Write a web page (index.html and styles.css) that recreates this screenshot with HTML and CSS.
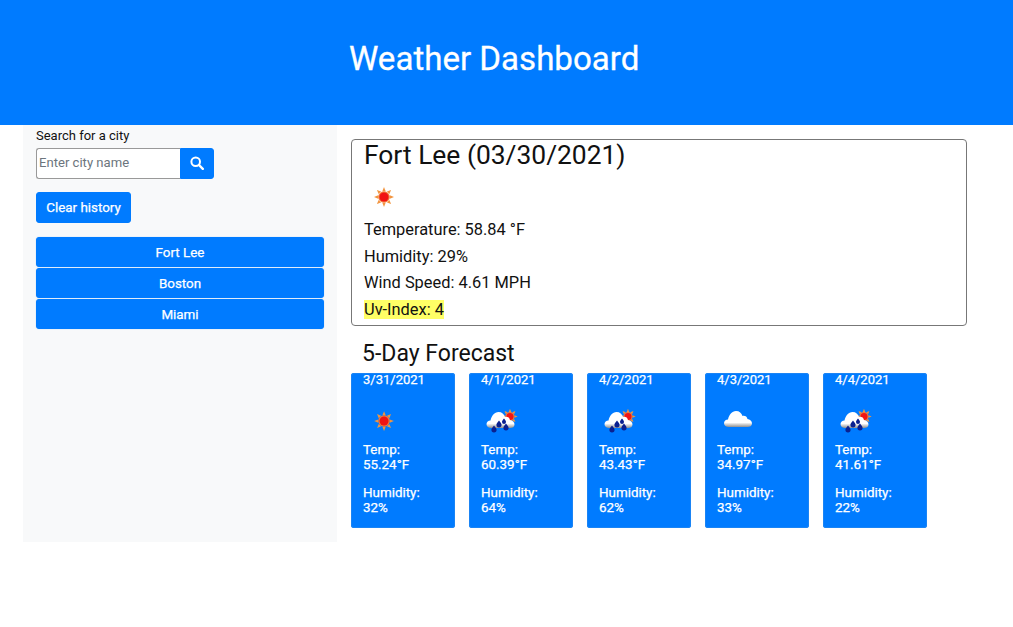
FILE: index.html

```html
<!DOCTYPE html>
<html lang="en">
  <head>
    <meta charset="UTF-8">
    <meta name="viewport" content="width=device-width, initial-scale=1">
    <title>Weather Dashboard</title>
    <link rel="stylesheet" href="styles.css">
  </head>
  <body>
    <svg class="defs" width="0" height="0">
      <defs>
        <g id="sun">
          <g fill="#f2953f">
            <path d="M12 0l2 5h-4z"/>
            <path d="M12 24l2-5h-4z"/>
            <path d="M0 12l5-2v4z"/>
            <path d="M24 12l-5-2v4z"/>
            <path d="M3.500 3.500l5 2-3 3z"/>
            <path d="M20.500 3.500l-5 2 3 3z"/>
            <path d="M3.500 20.500l5-2-3-3z"/>
            <path d="M20.500 20.500l-5-2 3-3z"/>
          </g>
          <circle cx="12" cy="12" r="7" fill="#f47c3c"/>
          <circle cx="12" cy="12" r="5.500" fill="#f01414"/>
        </g>
        <linearGradient id="cloud-fill" x1="0" y1="0" x2="0" y2="1">
          <stop offset="0" stop-color="#ffffff"/>
          <stop offset="0.72" stop-color="#ffffff"/>
          <stop offset="1" stop-color="#8f8f8f"/>
        </linearGradient>
        <path id="cloud" fill="url(#cloud-fill)" d="M5 16C2 16 0 14.500 0 12.200 0 10 1.800 8.600 4 8.500 5 4 8 0 12 0c3.500 0 5.500 2 6.500 5 1-.4 2.200-.3 3.200.3 1 .6 1.500 1.500 1.700 2.700 2.600 .3 4.600 2.100 4.600 4.400 0 2.200-2 3.600-4.500 3.600z"/>
        <g id="rain-cloud">
          <use href="#sun" transform="translate(21.300 -.2) scale(.64)"/>
          <use href="#cloud" transform="translate(5.500 3)"/>
          <g fill="#0a2090">
            <path d="M13 16.500c1.700 2.100 2.600 3.100 2.600 4.300a2.600 2.600 0 0 1-5.200 0c0-1.200.9-2.200 2.600-4.300z"/>
            <path d="M18 11.500c1.700 2.100 2.600 3.100 2.600 4.300a2.600 2.600 0 0 1-5.200 0c0-1.200.9-2.200 2.600-4.300z"/>
            <path d="M23 9.500c1.300 1.700 2 2.500 2 3.500a2 2 0 0 1-4 0c0-1 .7-1.800 2-3.500z"/>
            <path d="M25 14.500c1.700 2.100 2.600 3.100 2.600 4.300a2.600 2.600 0 0 1-5.200 0c0-1.200.9-2.200 2.600-4.300z"/>
          </g>
        </g>
      </defs>
    </svg>

    <header class="banner">
      <h1>Weather Dashboard</h1>
    </header>

    <div class="page">
      <aside class="sidebar">
        <label class="search-label" for="city">Search for a city</label>
        <form class="search">
          <input type="text" id="city" placeholder="Enter city name">
          <button type="button" class="btn search-btn" aria-label="Search">
            <svg width="14" height="14" viewBox="0 0 14 14">
              <circle cx="5.700" cy="5.700" r="4.300" fill="none" stroke="#fff" stroke-width="2"/>
              <path d="M9 9l3.800 3.800" stroke="#fff" stroke-width="2.400" stroke-linecap="round"/>
            </svg>
          </button>
        </form>
        <button type="button" class="btn clear-btn">Clear history</button>
        <div class="history">
          <button type="button" class="btn">Fort Lee</button>
          <button type="button" class="btn">Boston</button>
          <button type="button" class="btn">Miami</button>
        </div>
      </aside>

      <main class="content">
        <section class="today">
          <h2>Fort Lee (03/30/2021)</h2>
          <svg class="today-icon" width="20" height="20" viewBox="0 0 24 24"><use href="#sun"/></svg>
          <p>Temperature: 58.84 °F</p>
          <p>Humidity: 29%</p>
          <p>Wind Speed: 4.61 MPH</p>
          <p><span class="uv">Uv-Index: 4</span></p>
        </section>

        <h3>5-Day Forecast</h3>
        <div class="forecast">
          <div class="day">
            <div class="date">3/31/2021</div>
            <svg class="day-icon" width="40" height="26" viewBox="0 0 40 26"><use href="#sun" transform="translate(11.200 2.200) scale(.82)"/></svg>
            <p>Temp:<br>55.24°F</p>
            <p>Humidity:<br>32%</p>
          </div>
          <div class="day">
            <div class="date">4/1/2021</div>
            <svg class="day-icon" width="40" height="26" viewBox="0 0 40 26"><use href="#rain-cloud"/></svg>
            <p>Temp:<br>60.39°F</p>
            <p>Humidity:<br>64%</p>
          </div>
          <div class="day">
            <div class="date">4/2/2021</div>
            <svg class="day-icon" width="40" height="26" viewBox="0 0 40 26"><use href="#rain-cloud"/></svg>
            <p>Temp:<br>43.43°F</p>
            <p>Humidity:<br>62%</p>
          </div>
          <div class="day">
            <div class="date">4/3/2021</div>
            <svg class="day-icon" width="40" height="26" viewBox="0 0 40 26"><use href="#cloud" transform="translate(7 2)"/></svg>
            <p>Temp:<br>34.97°F</p>
            <p>Humidity:<br>33%</p>
          </div>
          <div class="day">
            <div class="date">4/4/2021</div>
            <svg class="day-icon" width="40" height="26" viewBox="0 0 40 26"><use href="#rain-cloud"/></svg>
            <p>Temp:<br>41.61°F</p>
            <p>Humidity:<br>22%</p>
          </div>
        </div>
      </main>
    </div>
  </body>
</html>
```

FILE: styles.css

```css
* {
  box-sizing: border-box;
}

body {
  margin: 0;
  background: #fff;
  color: #212529;
  font-family: Roboto, "Liberation Sans", sans-serif;
}

.defs {
  position: absolute;
}

.banner {
  height: 125px;
  padding: 37px 0 0 349px;
  background: #007bff;
  color: #fff;
}

.banner h1 {
  margin: 0;
  font-size: 33.100px;
  font-weight: 400;
  line-height: 44px;
  -webkit-text-stroke: .3px #fff;
}

.page {
  display: flex;
  padding-left: 23px;
}

.sidebar {
  width: 314px;
  height: 417px;
  padding: 3px 13px 0;
  background: #f8f9fa;
}

.search-label {
  display: block;
  height: 20px;
  font-size: 13px;
  line-height: 16px;
  color: #111;
}

.search {
  display: flex;
  width: 178px;
  height: 31px;
}

.search input {
  width: 144px;
  height: 31px;
  padding: 0 2px 2px;
  border: 1px solid #999;
  border-right: 0;
  border-radius: 3px 0 0 3px;
  background: #fff;
  font: 13.100px Roboto, sans-serif;
  color: #333;
}

.search input::placeholder {
  color: #6c757d;
  opacity: 1;
}

.btn {
  border: 1px solid #007bff;
  border-radius: 3px;
  background: #007bff;
  color: #fff;
  font: 400 13.400px Roboto, sans-serif;
  padding: 0 0 1px;
  -webkit-text-stroke: .25px #fff;
}

.search-btn {
  display: flex;
  align-items: center;
  justify-content: center;
  width: 34px;
  height: 31px;
  padding-bottom: 2px;
  border-radius: 0 3px 3px 0;
}

.clear-btn {
  display: block;
  width: 95px;
  height: 31px;
  margin-top: 13px;
}

.history {
  display: flex;
  flex-direction: column;
  gap: 1px;
  margin-top: 14px;
}

.history .btn {
  width: 288px;
  height: 30px;
  padding: 0;
  box-shadow: 0 0 1px #7db8f8;
}

.content {
  flex: 1;
  padding: 14px 46px 0 14px;
}

.today {
  height: 187px;
  padding: 0 12px;
  border: 1px solid #777;
  border-radius: 4px;
  color: #111;
}

.today h2 {
  margin: 0;
  font-size: 26.400px;
  font-weight: 400;
  line-height: 31px;
}

.today-icon {
  display: block;
  margin: 16px 0 0 10px;
}

.today p {
  margin: 0;
  font-size: 16.400px;
  line-height: 19px;
  height: 26.600px;
}

.today .today-icon + p {
  margin-top: 13px;
}

.uv {
  background: #ffff66;
}

.content h3 {
  margin: 14px 0 0 11px;
  font-size: 23px;
  font-weight: 400;
  line-height: 27px;
  color: #111;
}

.forecast {
  display: flex;
  gap: 14px;
  margin-top: 6px;
}

.day {
  width: 104px;
  height: 155px;
  padding: 0 12px;
  border-radius: 3px;
  background: #007bff;
  box-shadow: inset 0 0 0 1px #1a84f5;
  color: #fff;
  font-size: 13.400px;
  line-height: 15px;
  -webkit-text-stroke: .25px #fff;
}

.date {
  height: 14px;
  font-size: 13px;
  line-height: 14px;
}

.day-icon {
  display: block;
  margin-top: 22px;
}

.day p {
  margin: 0;
  padding-top: 13px;
  height: 43px;
}

.day .day-icon + p {
  margin-top: 7px;
  padding-top: 0;
  height: 30px;
}
```
